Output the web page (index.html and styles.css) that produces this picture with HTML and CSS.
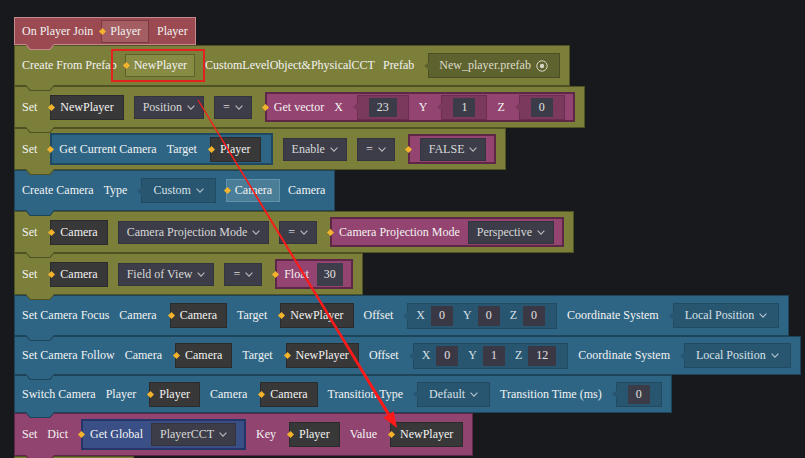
FILE: index.html
```html
<!DOCTYPE html>
<html>
<head>
<meta charset="utf-8">
<link rel="stylesheet" href="styles.css">
</head>
<body>
<div class="stack">
  <div class="blk ev r1">
    <span>On Player Join</span>
    <span class="out ev-out m8">Player</span>
    <span class="m8">Player</span>
  </div>

  <div class="blk ol r2">
    <span>Create From Prefab</span>
    <span class="out ol-out m8 hl">NewPlayer</span>
    <span>CustomLevelObject&amp;PhysicalCCT</span>
    <span class="m8">Prefab</span>
    <span class="slot ol-slot">New_player.prefab<svg class="radio" viewBox="0 0 12 12"><circle cx="6" cy="6" r="5.2" fill="none" stroke="#d6d6c6" stroke-width="1"/><circle cx="6" cy="6" r="2.2" fill="#d6d6c6"/></svg></span>
  </div>

  <div class="blk ol r3">
    <span>Set</span>
    <span class="pill">NewPlayer</span>
    <span class="dd">Position<svg class="chev" viewBox="0 0 8 5"><path d="M0.6 0.7 L4 4.1 L7.4 0.7"/></svg></span>
    <span class="dd">=<svg class="chev" viewBox="0 0 8 5"><path d="M0.6 0.7 L4 4.1 L7.4 0.7"/></svg></span>
    <span class="vb pk">
      <span>Get vector</span>
      <span>X</span>
      <span class="slot pk-slot"><span class="num w">23</span></span>
      <span>Y</span>
      <span class="slot pk-slot"><span class="num">1</span></span>
      <span>Z</span>
      <span class="slot pk-slot"><span class="num">0</span></span>
    </span>
  </div>

  <div class="blk ol r4">
    <span>Set</span>
    <span class="vb bv">
      <span>Get Current Camera</span>
      <span>Target</span>
      <span class="pill">Player</span>
    </span>
    <span class="dd">Enable<svg class="chev" viewBox="0 0 8 5"><path d="M0.6 0.7 L4 4.1 L7.4 0.7"/></svg></span>
    <span class="dd">=<svg class="chev" viewBox="0 0 8 5"><path d="M0.6 0.7 L4 4.1 L7.4 0.7"/></svg></span>
    <span class="vb pk pl10">
      <span class="dd">FALSE<svg class="chev" viewBox="0 0 8 5"><path d="M0.6 0.7 L4 4.1 L7.4 0.7"/></svg></span>
    </span>
  </div>

  <div class="blk bl r5">
    <span>Create Camera</span>
    <span>Type</span>
    <span class="slot bl-slot">Custom<svg class="chev lt" viewBox="0 0 8 5"><path d="M0.6 0.7 L4 4.1 L7.4 0.7"/></svg></span>
    <span class="out bl-out">Camera</span>
    <span class="m8">Camera</span>
  </div>

  <div class="blk ol r6">
    <span>Set</span>
    <span class="pill">Camera</span>
    <span class="dd">Camera Projection Mode<svg class="chev" viewBox="0 0 8 5"><path d="M0.6 0.7 L4 4.1 L7.4 0.7"/></svg></span>
    <span class="dd">=<svg class="chev" viewBox="0 0 8 5"><path d="M0.6 0.7 L4 4.1 L7.4 0.7"/></svg></span>
    <span class="vb pk">
      <span>Camera Projection Mode</span>
      <span class="dd m8">Perspective<svg class="chev" viewBox="0 0 8 5"><path d="M0.6 0.7 L4 4.1 L7.4 0.7"/></svg></span>
    </span>
  </div>

  <div class="blk ol r7">
    <span>Set</span>
    <span class="pill">Camera</span>
    <span class="dd">Field of View<svg class="chev" viewBox="0 0 8 5"><path d="M0.6 0.7 L4 4.1 L7.4 0.7"/></svg></span>
    <span class="dd">=<svg class="chev" viewBox="0 0 8 5"><path d="M0.6 0.7 L4 4.1 L7.4 0.7"/></svg></span>
    <span class="vb pk">
      <span>Float</span>
      <span class="num tall m8">30</span>
    </span>
  </div>

  <div class="blk bl r8">
    <span>Set Camera Focus</span>
    <span>Camera</span>
    <span class="pill">Camera</span>
    <span>Target</span>
    <span class="pill">NewPlayer</span>
    <span>Offset</span>
    <span class="slot bl-slot vec">
      <span>X</span><span class="num">0</span>
      <span>Y</span><span class="num">0</span>
      <span>Z</span><span class="num">0</span>
    </span>
    <span>Coordinate System</span>
    <span class="slot bl-slot">Local Position<svg class="chev lt" viewBox="0 0 8 5"><path d="M0.6 0.7 L4 4.1 L7.4 0.7"/></svg></span>
  </div>

  <div class="blk bl r9">
    <span>Set Camera Follow</span>
    <span>Camera</span>
    <span class="pill">Camera</span>
    <span>Target</span>
    <span class="pill">NewPlayer</span>
    <span>Offset</span>
    <span class="slot bl-slot vec">
      <span>X</span><span class="num">0</span>
      <span>Y</span><span class="num">1</span>
      <span>Z</span><span class="num">12</span>
    </span>
    <span>Coordinate System</span>
    <span class="slot bl-slot">Local Position<svg class="chev lt" viewBox="0 0 8 5"><path d="M0.6 0.7 L4 4.1 L7.4 0.7"/></svg></span>
  </div>

  <div class="blk bl r10">
    <span>Switch Camera</span>
    <span>Player</span>
    <span class="pill">Player</span>
    <span>Camera</span>
    <span class="pill">Camera</span>
    <span>Transition Type</span>
    <span class="slot bl-slot">Default<svg class="chev lt" viewBox="0 0 8 5"><path d="M0.6 0.7 L4 4.1 L7.4 0.7"/></svg></span>
    <span>Transition Time (ms)</span>
    <span class="slot bl-slot"><span class="num">0</span></span>
  </div>

  <div class="blk pkr r11">
    <span>Set</span>
    <span>Dict</span>
    <span class="vb nv">
      <span>Get Global</span>
      <span class="dd m8">PlayerCCT<svg class="chev" viewBox="0 0 8 5"><path d="M0.6 0.7 L4 4.1 L7.4 0.7"/></svg></span>
    </span>
    <span>Key</span>
    <span class="pill">Player</span>
    <span>Value</span>
    <span class="pill">NewPlayer</span>
  </div>

  <div class="blk ol r12"></div>
</div>

<svg class="arrow" viewBox="0 0 805 458" width="805" height="458">
  <polygon points="197.5,100.3 198.5,99.7 389.9,413.6 387.3,415.2" fill="#ff1a1a"/>
  <polygon points="397,428 383.5,417.5 393.7,411.3" fill="#ff1a1a"/>
</svg>
</body>
</html>
```

FILE: styles.css
```css
* { box-sizing: border-box; }
html, body { margin: 0; padding: 0; }
body {
  width: 805px;
  height: 458px;
  overflow: hidden;
  position: relative;
  background: #18191d;
  font-family: "Liberation Serif", "Times New Roman", serif;
  font-size: 12px;
  color: #f3f3f3;
}

.stack {
  display: flex;
  flex-direction: column;
  align-items: flex-start;
  padding: 17px 0 0 14px;
}

/* statement blocks */
.blk {
  --bg: #7b7f3a;
  --bd: #4f5224;
  position: relative;
  display: flex;
  align-items: center;
  gap: 10px;
  padding: 0 9px 0 7px;
  background: var(--bg);
  border: 1px solid var(--bd);
  white-space: nowrap;
}
.blk::before, .blk::after {
  content: "";
  position: absolute;
  clip-path: polygon(0 0, 100% 0, 84% 100%, 16% 100%);
  z-index: 5;
}
.blk::before { left: 10px; bottom: -6px; width: 30px; height: 6px; background: var(--bd); }
.blk::after { left: 11px; bottom: -5px; width: 28px; height: 5px; background: var(--bg); }

.ev { --bg: #9c4a51; --bd: #c48a8e; }
.ol { --bg: #7b7f3a; --bd: #4f5224; }
.bl { --bg: #2e6584; --bd: #1d4459; }
.pkr { --bg: #924470; --bd: #5f2747; }

.r1 { height: 28px; padding-right: 7px; }
.r2 { height: 41px; }
.r3 { height: 42px; }
.r4 { height: 42px; }
.r5 { height: 41px; }
.r6 { height: 42px; }
.r7 { height: 42px; }
.r8 { height: 41px; }
.r9 { height: 39px; }
.r10 { height: 38px; }
.r11 { height: 43px; }
.r12 { height: 12px; width: 120px; }
.r12::before, .r12::after { display: none; }

.m8 { margin-left: -2px; }

/* connector diamond */
.out::before, .pill::before, .vb::before {
  content: "";
  position: absolute;
  top: 50%;
  width: 5px;
  height: 5px;
  margin-top: -2.5px;
  background: #f4b32c;
  transform: rotate(45deg);
  z-index: 2;
}
.out::before, .pill::before { left: -2px; }
.vb::before { left: -4px; }

/* output (declaration) boxes */
.out {
  position: relative;
  height: 23px;
  padding: 0 7px 0 8px;
  display: flex;
  align-items: center;
  border: 1px solid;
}
.ev-out { background: #a45d62; border-color: #7c3b41; }
.ol-out { background: #878b44; border-color: #5e612c; }
.bl-out { background: #4a7d97; border-color: #6092ab; }

.hl::after {
  content: "";
  position: absolute;
  left: -15px;
  right: -11px;
  top: -6px;
  bottom: -6px;
  border: 2px solid #e3211f;
  z-index: 6;
}

/* variable pills */
.pill {
  position: relative;
  height: 25px;
  margin-left: 3px;
  padding: 0 9px;
  display: flex;
  align-items: center;
  background: #383838;
  border: 1px solid #2b2b2b;
}

/* dropdowns */
.dd {
  height: 23px;
  padding: 0 8px;
  display: flex;
  align-items: center;
  gap: 5px;
  background: #3c3d48;
  border: 1px solid #33343e;
  color: #d9d9d9;
}
.chev { width: 8px; height: 5px; fill: none; stroke: #bcbcbc; stroke-width: 1.1; }
.chev.lt { stroke: #b6c5cf; }
.radio { width: 12px; height: 12px; }

/* value blocks */
.vb {
  position: relative;
  height: 30px;
  margin-left: 3px;
  display: flex;
  align-items: center;
  gap: 10px;
  padding: 0 8px 0 7px;
  border: 2px solid;
}
.vb.bv { height: 32px; padding-right: 10px; }
.pk { background: #934470; border-color: #5e2746; }
.bv { background: #2e6584; border-color: #1f4961; }
.nv { background: #3a4f86; border-color: #263568; height: 31px; }
.pl10 { padding-left: 10px; }

/* input slots with notch */
.slot {
  --sb: #5e622f;
  position: relative;
  height: 25px;
  margin-left: 4px;
  display: flex;
  align-items: center;
  gap: 5px;
  padding: 0 11px;
  background: var(--sb);
  border: 1px solid;
}
.slot::before {
  content: "";
  position: absolute;
  left: -5px;
  top: 50%;
  margin-top: -4px;
  border-right: 5px solid var(--sb);
  border-top: 4px solid transparent;
  border-bottom: 4px solid transparent;
}
.ol-slot { --sb: #5e622f; border-color: #4c4f25; color: #dcdccb; padding-left: 10px; }
.pk-slot { --sb: #7b395d; border-color: #6a2e50; }
.bl-slot { --sb: #285671; border-color: #224a61; color: #d7e0e6; }

.num {
  height: 19px;
  padding: 0 8px;
  display: flex;
  align-items: center;
  background: #3b3c47;
  color: #e2e2e2;
}
.num.tall { height: 23px; background: #3d3e49; padding: 0 7px; }

.vec { gap: 6px; height: 26px; padding: 0 11px 0 8px; }
.vec .num { height: 20px; margin-right: 4px; background: #3b3845; }
.vec .num:last-child { margin-right: 0; }

.arrow {
  position: absolute;
  left: 0;
  top: 0;
  pointer-events: none;
  z-index: 10;
}
```
